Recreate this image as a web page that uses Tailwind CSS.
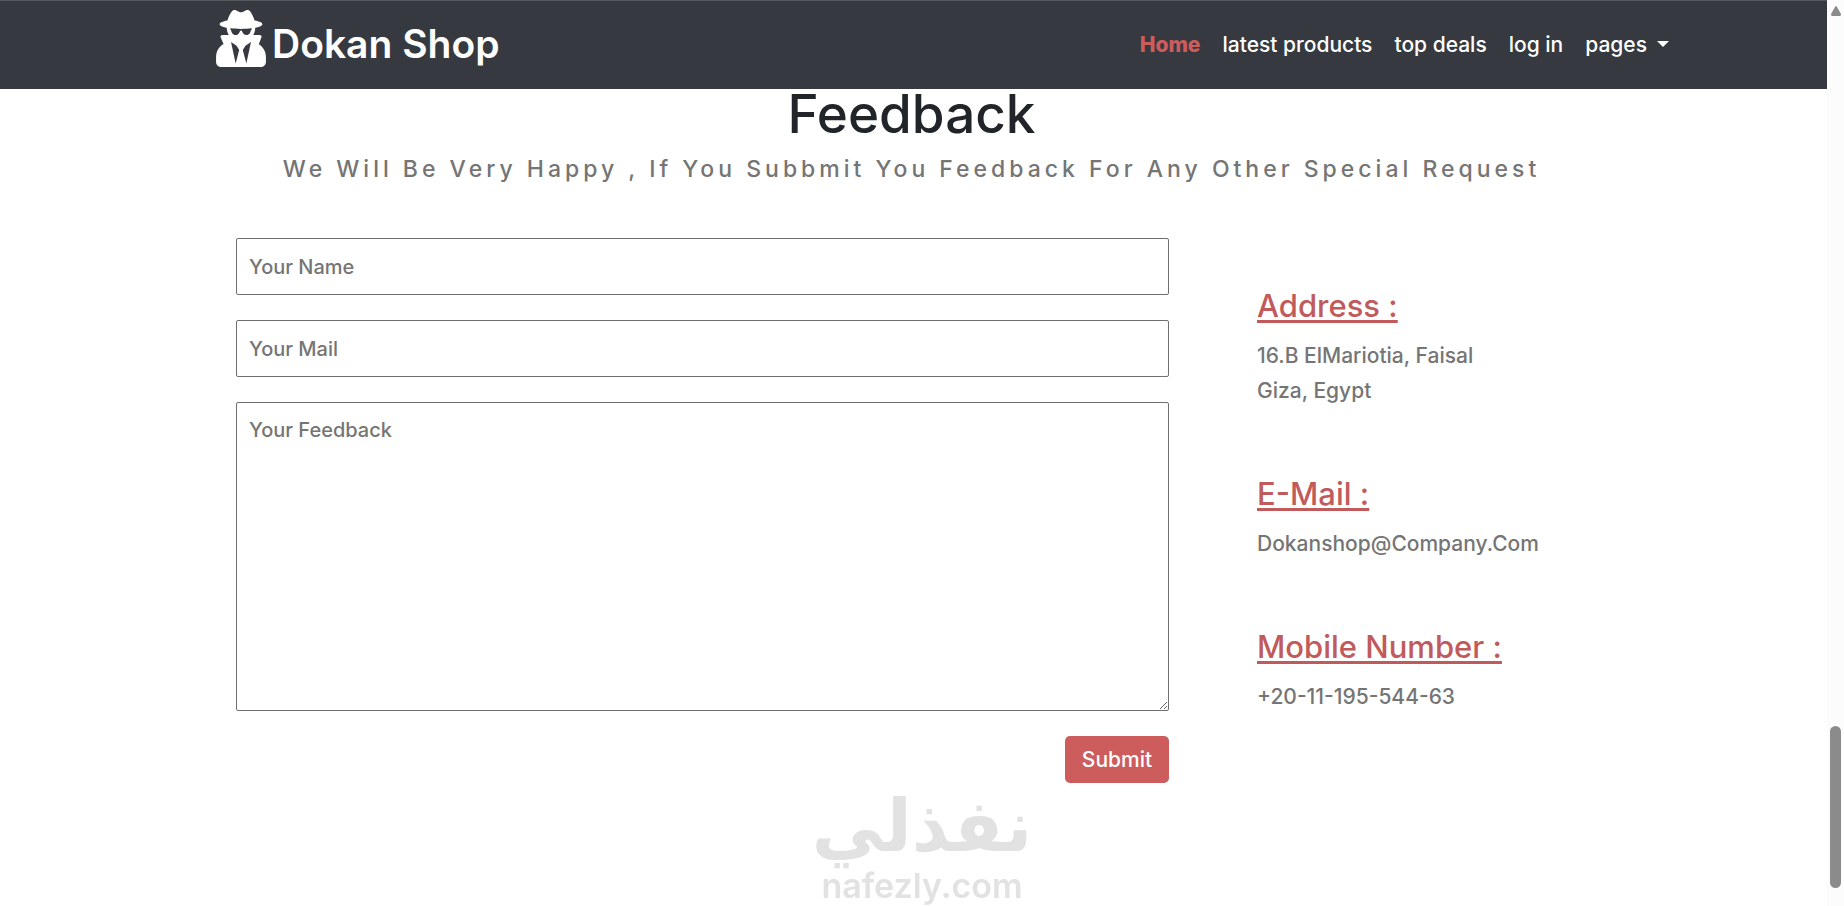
<!DOCTYPE html>
<html lang="en">
<head>
    <meta charset="UTF-8">
    <meta name="viewport" content="width=device-width, initial-scale=1.0">
    <title>Dokan Shop</title>
    <script src="https://cdn.jsdelivr.net/npm/@tailwindcss/browser@4"></script>
</head>
<body class="flex min-h-screen bg-white font-[Inter,sans-serif] font-medium text-[#757575]">

    <div class="flex-1">
        <!-- Navbar -->
        <header class="flex h-[89px] items-center justify-between border-t border-[#54575b] bg-[#363a40] pl-[216px] pr-[158px] text-white">
            <a href="#" class="flex items-center gap-1.5 pb-0.5 text-[39px] leading-[56px] font-semibold">
                <svg class="mb-3 h-[57px] w-[50px]" viewBox="0 0 448 512" fill="currentColor" aria-hidden="true">
                    <path d="M383.9 308.3l23.9-62.6c4-10.5-3.7-21.7-15-21.7h-58.5c11-18.9 17.8-40.6 17.8-64v-.3c39.2-7.8 64-19.1 64-31.7 0-13.3-27.3-25.1-70.1-33-9.2-32.8-27-65.8-40.6-82.8-9.5-11.9-25.9-15.6-39.5-8.8l-27.6 13.8c-9 4.5-19.6 4.5-28.6 0L182.1 3.4c-13.6-6.8-30-3.1-39.5 8.8-13.5 17-31.4 50-40.6 82.8-42.7 7.9-70 19.7-70 33 0 12.6 24.8 23.9 64 31.7v.3c0 23.4 6.8 45.1 17.8 64H56.3c-11.5 0-19.2 11.7-14.7 22.3l25.8 60.2C27.3 329.8 0 372.7 0 422.4v44.8C0 491.9 20.1 512 44.8 512h358.4c24.7 0 44.8-20.1 44.8-44.8v-44.8c0-48.4-25.8-90.4-64.1-114.1zM176 480l-41.6-192 49.6 32 24 40-32 120zm96 0l-32-120 24-40 49.6-32L272 480zm41.7-298.5c-3.9 11.9-7 24.6-16.5 33.4-10.1 9.3-48 22.4-64-25-2.8-8.4-15.4-8.4-18.3 0-17 50.2-56 32.4-64 25-9.5-8.8-12.7-21.5-16.5-33.4-.8-2.5-6.3-5.7-6.3-5.8v-10.8c28.3 3.6 61 5.8 96 5.8s67.7-2.1 96-5.8v10.8c-.1.1-5.6 3.2-6.4 5.8z"/>
                </svg>
                <span>Dokan Shop</span>
            </a>
            <nav class="flex items-center gap-[22px] text-[21px]">
                <a href="#" class="font-extrabold text-[#cd5c5c]">Home</a>
                <a href="#">latest products</a>
                <a href="#">top deals</a>
                <a href="#">log in</a>
                <a href="#" class="flex items-center gap-2.5">
                    pages
                    <svg class="mb-0.5 h-1.5 w-3" viewBox="0 0 12 6" fill="currentColor" aria-hidden="true"><path d="M0 0h12L6 6z"/></svg>
                </a>
            </nav>
        </header>

        <!-- Feedback -->
        <main class="pr-[240px] pl-[236px]">
            <h1 class="text-center text-[53px] leading-[50px] text-[#212529]">Feedback</h1>
            <p class="-mx-20 mt-3.5 text-center text-[23px] leading-[32px] tracking-[4px]">We Will Be Very Happy , If You Subbmit You Feedback For Any Other Special Request</p>

            <div class="mt-[53px] grid grid-cols-[1fr_330px] gap-[88px]">
                <form class="flex flex-col gap-[25px] text-[20px]">
                    <input type="text" name="name" aria-label="Your Name" placeholder="Your Name" class="h-[57px] rounded-xs border border-[#6f6f6f] px-3 placeholder:text-[#757575]">
                    <input type="email" name="mail" aria-label="Your Mail" placeholder="Your Mail" class="h-[57px] rounded-xs border border-[#6f6f6f] px-3 placeholder:text-[#757575]">
                    <textarea name="feedback" aria-label="Your Feedback" placeholder="Your Feedback" class="h-[309px] resize rounded-xs border border-[#6f6f6f] px-3 py-3 placeholder:text-[#757575]"></textarea>
                    <button type="submit" class="h-[47px] w-26 self-end rounded-[5px] bg-[#cd5c5c] text-[21px] text-white">Submit</button>
                </form>

                <!-- Contact info -->
                <div class="flex flex-col gap-[66px] pt-[48px] text-[21px] leading-[35px]">
                    <section>
                        <h2 class="mb-3 text-[31px] leading-[40px] text-[#c15b5b] underline decoration-[3px] underline-offset-3">Address :</h2>
                        <p>16.B ElMariotia, Faisal<br>Giza, Egypt</p>
                    </section>
                    <section>
                        <h2 class="mb-3 text-[31px] leading-[40px] text-[#c15b5b] underline decoration-[3px] underline-offset-3">E-Mail :</h2>
                        <p>Dokanshop@Company.Com</p>
                    </section>
                    <section>
                        <h2 class="mb-3 text-[31px] leading-[40px] text-[#c15b5b] underline decoration-[3px] underline-offset-3">Mobile Number :</h2>
                        <p>+20-11-195-544-63</p>
                    </section>
                </div>
            </div>
        </main>
    </div>

    <!-- Scrollbar -->
    <div class="sticky top-0 flex h-screen w-[17px] flex-col items-center justify-between bg-[#fcfcfc] pt-1.5 pb-[18px]" aria-hidden="true">
        <svg class="h-2.5 w-2.5" viewBox="0 0 10 10" fill="#8b8b8b"><path d="M4 1Q5-1 6 1L10 8Q10 10 9 10H1Q0 10 0 8z"/></svg>
        <div class="h-[162px] w-[11px] rounded-full bg-[#8b8b8b]"></div>
    </div>

    <!-- Watermark -->
    <div class="pointer-events-none fixed bottom-0 left-1/2 flex -translate-x-1/2 flex-col items-center gap-1 font-bold text-[#e2e2e2]">
        <span lang="ar" dir="rtl" class="font-['DejaVu_Sans',sans-serif] text-[72px] leading-[72px]">نفذلي</span>
        <span class="text-[34px] leading-[40px] font-semibold">nafezly.com</span>
    </div>
</body>
</html>
